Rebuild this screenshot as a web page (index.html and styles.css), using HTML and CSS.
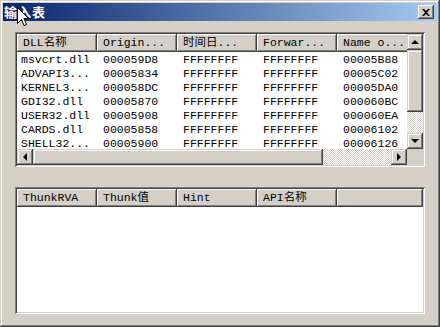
FILE: index.html
```html
<!DOCTYPE html>
<html lang="zh-CN">
<head>
  <meta charset="UTF-8">
  <title>输入表</title>
  <link rel="stylesheet" href="styles.css">
</head>
<body>
  <div class="window">
    <!-- Title bar -->
    <div class="titlebar">
      <span class="title">输入表</span>
      <svg class="cursor" width="12" height="20" viewBox="0 0 12 20">
        <path d="M0.5 0.5 L0.5 16.5 L4.5 12.5 L7 18.5 L9.5 17.5 L7 11.5 L11.5 11.5 Z" fill="#fff" stroke="#000" stroke-width="1"/>
      </svg>
      <div class="close-btn">
        <svg width="8" height="7" viewBox="0 0 8 7">
          <path d="M0 0 L2 0 L4 2 L6 0 L8 0 L5 3.5 L8 7 L6 7 L4 5 L2 7 L0 7 L3 3.5 Z" fill="#000"/>
        </svg>
      </div>
    </div>

    <!-- DLL list -->
    <div class="listview top">
      <div class="pane">
        <div class="header">
          <div class="hcell">DLL名称</div>
          <div class="hcell">Origin...</div>
          <div class="hcell">时间日...</div>
          <div class="hcell">Forwar...</div>
          <div class="hcell">Name o...</div>
        </div>
        <div class="row"><div class="cell">msvcrt.dll</div><div class="cell">000059D8</div><div class="cell">FFFFFFFF</div><div class="cell">FFFFFFFF</div><div class="cell">00005B88</div></div>
        <div class="row"><div class="cell">ADVAPI3...</div><div class="cell">00005834</div><div class="cell">FFFFFFFF</div><div class="cell">FFFFFFFF</div><div class="cell">00005C02</div></div>
        <div class="row"><div class="cell">KERNEL3...</div><div class="cell">000058DC</div><div class="cell">FFFFFFFF</div><div class="cell">FFFFFFFF</div><div class="cell">00005DA0</div></div>
        <div class="row"><div class="cell">GDI32.dll</div><div class="cell">00005870</div><div class="cell">FFFFFFFF</div><div class="cell">FFFFFFFF</div><div class="cell">000060BC</div></div>
        <div class="row"><div class="cell">USER32.dll</div><div class="cell">00005908</div><div class="cell">FFFFFFFF</div><div class="cell">FFFFFFFF</div><div class="cell">000060EA</div></div>
        <div class="row"><div class="cell">CARDS.dll</div><div class="cell">00005858</div><div class="cell">FFFFFFFF</div><div class="cell">FFFFFFFF</div><div class="cell">00006102</div></div>
        <div class="row"><div class="cell">SHELL32...</div><div class="cell">00005900</div><div class="cell">FFFFFFFF</div><div class="cell">FFFFFFFF</div><div class="cell">00006126</div></div>
      </div>

      <!-- vertical scrollbar -->
      <div class="vscroll">
        <div class="sbtn"><span class="arrow up"></span></div>
        <div class="thumb vthumb"></div>
        <div class="track"></div>
        <div class="sbtn"><span class="arrow down"></span></div>
      </div>

      <!-- horizontal scrollbar -->
      <div class="hscroll">
        <div class="sbtn"><span class="arrow left"></span></div>
        <div class="thumb hthumb"></div>
        <div class="track"></div>
        <div class="sbtn"><span class="arrow right"></span></div>
      </div>
      <div class="corner"></div>
    </div>

    <!-- Thunk list -->
    <div class="listview bottom">
      <div class="header">
        <div class="hcell">ThunkRVA</div>
        <div class="hcell">Thunk值</div>
        <div class="hcell">Hint</div>
        <div class="hcell">API名称</div>
        <div class="hcell fill"></div>
      </div>
    </div>
  </div>
</body>
</html>
```

FILE: styles.css
```css
/* Win2000 style dialog */
body {
  margin: 0;
  font-family: "Liberation Mono", "Noto Sans CJK SC", monospace;
  font-size: 11.5px;
  color: #000;
  background-color: #d4d0c8;
}

.window {
  width: 440px;
  height: 327px;
  box-sizing: border-box;
  padding: 3px;
  background-color: #d4d0c8;
  box-shadow: inset -1px -1px #404040, inset 1px 1px #d4d0c8,
              inset -2px -2px #808080, inset 2px 2px #fff;
  display: flex;
  flex-direction: column;
  overflow: hidden;
}

/* Title bar */
.titlebar {
  position: relative;
  height: 18px;
  flex: none;
  display: flex;
  align-items: center;
  justify-content: space-between;
  padding: 0 3px 0 1px;
  background: linear-gradient(to right, #0a246a, #a6caf0);
}

.title {
  color: #fff;
  font-family: "Noto Sans CJK SC", sans-serif;
  font-weight: bold;
  font-size: 13px;
  line-height: 18px;
  letter-spacing: 1px;
}

.cursor {
  position: absolute;
  left: 14px;
  top: 4px;
}

.close-btn {
  width: 16px;
  height: 14px;
  background-color: #d4d0c8;
  box-shadow: inset -1px -1px #404040, inset 1px 1px #fff,
              inset -2px -2px #808080;
  display: flex;
  align-items: center;
  justify-content: center;
}

/* List views */
.listview {
  box-sizing: border-box;
  background-color: #fff;
  padding: 2px;
  margin: 0 12px;
  box-shadow: inset 1px 1px #808080, inset -1px -1px #fff,
              inset 2px 2px #404040, inset -2px -2px #d4d0c8;
}

.listview.top {
  margin-top: 11px;
  height: 135px;
  display: grid;
  grid-template-columns: 1fr 16px;
  grid-template-rows: 1fr 16px;
}

.listview.bottom {
  margin-top: 20px;
  height: 127px;
}

.pane {
  overflow: hidden;
}

.header {
  display: flex;
  height: 18px;
}

.hcell {
  width: 80px;
  flex: none;
  box-sizing: border-box;
  padding-left: 6px;
  line-height: 18px;
  white-space: nowrap;
  background-color: #d4d0c8;
  box-shadow: inset -1px -1px #404040, inset 1px 1px #fff,
              inset -2px -2px #808080;
}

.hcell.fill {
  flex: 1;
}

.row {
  display: flex;
  height: 14px;
  line-height: 14px;
  margin-top: 0;
}

.header + .row {
  margin-top: 1px;
}

.cell {
  width: 80px;
  flex: none;
  box-sizing: border-box;
  padding-left: 6px;
  white-space: nowrap;
}

.cell:first-child {
  padding-left: 4px;
}

/* Scrollbars */
.vscroll {
  display: flex;
  flex-direction: column;
}

.hscroll {
  display: flex;
}

.track {
  flex: 1;
  background: repeating-conic-gradient(#d4d0c8 0 25%, #fff 0 50%) 0 0 / 2px 2px;
}

.sbtn,
.thumb {
  background-color: #d4d0c8;
  box-shadow: inset -1px -1px #404040, inset 1px 1px #d4d0c8,
              inset -2px -2px #808080, inset 2px 2px #fff;
}

.sbtn {
  width: 16px;
  height: 16px;
  flex: none;
  display: flex;
  align-items: center;
  justify-content: center;
}

.vthumb {
  height: 62px;
}

.hthumb {
  width: 290px;
}

.corner {
  background-color: #d4d0c8;
}

.arrow {
  width: 0;
  height: 0;
}

.arrow.up {
  border-left: 4px solid transparent;
  border-right: 4px solid transparent;
  border-bottom: 4px solid #000;
}

.arrow.down {
  border-left: 4px solid transparent;
  border-right: 4px solid transparent;
  border-top: 4px solid #000;
}

.arrow.left {
  border-top: 4px solid transparent;
  border-bottom: 4px solid transparent;
  border-right: 4px solid #000;
}

.arrow.right {
  border-top: 4px solid transparent;
  border-bottom: 4px solid transparent;
  border-left: 4px solid #000;
}
```
